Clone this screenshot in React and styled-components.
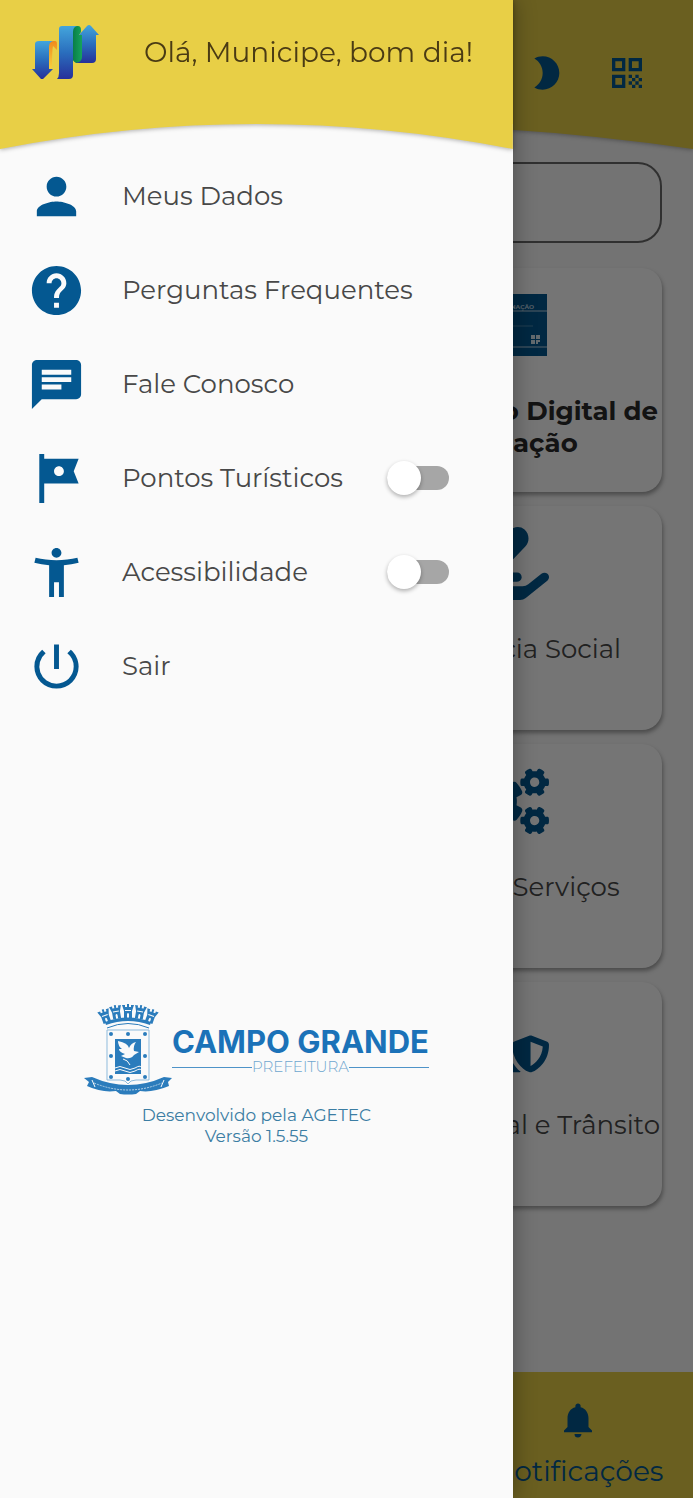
import React, { useState } from 'react';
import styled, { createGlobalStyle } from 'styled-components';
import {
  MdPerson,
  MdHelp,
  MdChat,
  MdTour,
  MdAccessibilityNew,
  MdPowerSettingsNew,
  MdBrightness2,
  MdQrCode,
  MdNotifications,
} from 'react-icons/md';
import { FaHandHoldingHeart, FaCogs, FaUserShield } from 'react-icons/fa';

const GlobalStyle = createGlobalStyle`
  * {
    box-sizing: border-box;
  }

  body {
    margin: 0;
    background: #fff;
    color: #484848;
    font-family: Montserrat, Inter, "Open Sans", sans-serif;
    font-weight: 400;
  }

  button, input {
    font: inherit;
    color: inherit;
  }
`;

const Screen = styled.div`
  position: relative;
  min-height: calc(100vh - 2px);
  overflow: hidden;
  display: flex;
  background: #fafafa;
`;

const Home = styled.div`
  flex: 1;
  display: flex;
  flex-direction: column;
`;

const Header = styled.header`
  filter: drop-shadow(0 1px 2px rgba(0, 0, 0, 0.3));

  .curve {
    display: block;
    width: 100%;
    height: 25px;
    fill: #e8cf46;
  }
`;

const HeaderBar = styled.div`
  display: flex;
  align-items: center;
  height: 124px;
  background: #e8cf46;
`;

const HomeBar = styled(HeaderBar)`
  justify-content: flex-end;
  gap: 41px;
  padding: 22px 46px 0 0;
`;

const DrawerBar = styled(HeaderBar)`
  gap: 44px;
  padding: 0 0 20px 32px;
`;

const IconButton = styled.button`
  display: flex;
  padding: 0;
  border: none;
  background: none;
  color: #045891;
  font-size: 40px;
`;

const Search = styled.input`
  height: 81px;
  margin: 13px 31px 25px;
  padding: 0 24px;
  border: 2px solid #6a6a6a;
  border-radius: 24px;
  background: transparent;
`;

const Cards = styled.div`
  display: grid;
  grid-template-columns: 1fr 1fr;
  gap: 14px;
  padding: 0 31px;
`;

const Card = styled.a`
  grid-column: 2;
  display: flex;
  flex-direction: column;
  align-items: center;
  height: 224px;
  border-radius: 20px;
  background: #fff;
  box-shadow: 1px 3px 4px rgba(0, 0, 0, 0.35);
  color: ${props => (props.$strong ? '#2a2a2a' : '#484848')};
  font-size: 26px;
  font-weight: ${props => (props.$strong ? 700 : 400)};
  line-height: 32px;
  text-align: center;
  text-decoration: none;
  white-space: nowrap;
`;

const CardIcon = styled.span`
  display: flex;
  align-items: center;
  height: 114px;
  margin-bottom: 13px;
  color: #045891;

  svg {
    width: 82px;
    height: 73px;
  }
`;

const BottomNav = styled.nav`
  display: grid;
  grid-template-columns: repeat(3, 1fr);
  height: 126px;
  margin-top: auto;
  background: #e8cf46;
`;

const NavItem = styled.a`
  grid-column: 3;
  display: flex;
  flex-direction: column;
  align-items: center;
  gap: 14px;
  padding-top: 27px;
  color: #045891;
  font-size: 28px;
  line-height: 32px;
  text-decoration: none;

  svg {
    width: 42px;
    height: 42px;
  }
`;

const Scrim = styled.div`
  position: absolute;
  inset: 0;
  background: rgba(0, 0, 0, 0.54);
`;

const Drawer = styled.aside`
  position: absolute;
  inset: 0 auto 0 0;
  width: 74%;
  background: #fafafa;
  box-shadow: 2px 0 20px rgba(0, 0, 0, 0.3);
`;

const Greeting = styled.h1`
  margin: 0;
  color: #4a3b14;
  font-size: 28px;
  font-weight: 400;
  white-space: nowrap;
`;

const Menu = styled.ul`
  margin: 0;
  padding: 0;
  list-style: none;
`;

const MenuRow = styled.li`
  display: flex;
  align-items: center;
  height: 94px;
  padding: 0 64px 0 27px;
  font-size: 26px;
  white-space: nowrap;

  a, label {
    display: flex;
    align-items: center;
    flex: 1;
    gap: 36px;
    color: inherit;
    text-decoration: none;
  }

  svg {
    width: 59px;
    height: 59px;
    color: #045891;
  }
`;

const Switch = styled.input`
  appearance: none;
  display: flex;
  align-items: center;
  flex: none;
  width: 62px;
  height: 24px;
  margin: 0;
  border-radius: 12px;
  background: ${props => (props.checked ? '#7fabc8' : '#a6a6a6')};

  &::before {
    content: '';
    width: 34px;
    height: 34px;
    margin-left: ${props => (props.checked ? '28px' : '0')};
    border-radius: 50%;
    background: ${props => (props.checked ? '#045891' : '#fff')};
    box-shadow: 0 2px 4px rgba(0, 0, 0, 0.3);
  }
`;

const Credits = styled.footer`
  margin-top: 291px;
  color: #3b7da3;
  font-size: 17px;
  line-height: 21px;
  text-align: center;

  p {
    margin: 0;
  }
`;

const Brand = styled.div`
  display: flex;
  justify-content: center;
  margin-bottom: 9px;
`;

const Wordmark = styled.div`
  padding-top: 22px;
  color: #1b72b8;
  font-family: Inter, sans-serif;
  font-size: 31px;
  font-weight: 700;
  line-height: 32px;
  white-space: nowrap;
`;

const Department = styled.div`
  display: flex;
  align-items: center;
  color: #6ea6cf;
  font-family: Montserrat, Inter, sans-serif;
  font-size: 15px;
  font-weight: 300;
  line-height: 18px;

  &::before, &::after {
    content: '';
    flex: 1;
    height: 1px;
    background: #4e93c8;
  }
`;

const Curve = () => (
  <svg className="curve" viewBox="0 0 100 25" preserveAspectRatio="none" aria-hidden="true">
    <path d="M0 -1H100V25Q50 -25 0 25Z" />
  </svg>
);

const Logo = () => (
  <svg width="68" height="56" viewBox="32 24 68 56" aria-hidden="true">
    <defs>
      <linearGradient id="blue" x1="0" y1="0" x2="0" y2="1">
        <stop offset="0" stopColor="#43a5dc" />
        <stop offset="0.5" stopColor="#2a6ebd" />
        <stop offset="1" stopColor="#26309a" />
      </linearGradient>
      <linearGradient id="orange" x1="0" y1="0" x2="0" y2="1">
        <stop offset="0" stopColor="#f08a1c" />
        <stop offset="1" stopColor="#f8cf3c" />
      </linearGradient>
      <linearGradient id="green" x1="0" y1="0" x2="1" y2="0">
        <stop offset="0" stopColor="#087a45" />
        <stop offset="1" stopColor="#16a45c" />
      </linearGradient>
    </defs>
    <path fill="url(#orange)" d="M48 41H55Q57 41 57 44V50L53 46Q52 50 52 68H48Z" />
    <path fill="url(#blue)" d="M35 44Q35 41 39 41H53Q49 42 49 47V69H53L43 79H41L32 69H35Z" />
    <path fill="url(#green)" d="M72 26H78Q81 26 81 30V32L79 35H82V63H76Q72 61 72 56Z" />
    <path fill="url(#blue)" d="M59 29Q59 26 62 26H77Q73 27 73 32V75Q73 79 69 79H57Q59 77 59 73Z" />
    <path fill="url(#blue)" d="M82 35H79L87 26Q89 24 91 26L99 35H96V59Q96 63 92 63H76Q82 62 82 57Z" />
  </svg>
);

const CertificateIcon = () => (
  <svg viewBox="-2 -5 82 73" aria-hidden="true">
    <path fill="#045891" d="M0 0H78V62H0Z" />
    <path stroke="#b9d2e2" d="M0 17H78M0 53H78" />
    <path stroke="#4787ad" d="M12 32H64" />
    <text x="65" y="15" textAnchor="end" fill="#b9d2e2" fontSize="6" fontWeight="700">VACINAÇÃO</text>
    <path fill="#d8e6ef" d="M62 41H66V45H62ZM67 41H71V45H67ZM62 46H66V50H62ZM67 46H71V48H69V50H67Z" />
  </svg>
);

const Tower = ({ x, y, angle }) => (
  <g transform={`translate(${x} ${y}) rotate(${angle})`}>
    <path d="M-6 -6H-3V-4H-1V-7H1V-4H3V-6H6L4 0V7H-4V0Z" />
    <path fill="#fafafa" d="M-1 7V3Q0 1 1 3V7ZM-3 -1H3V0H-3Z" />
  </g>
);

const Crest = () => (
  <svg width="88" height="92" viewBox="14 14 88 92" fill="#2b7cbc" aria-hidden="true">
    <Tower x={35} y={26} angle={-20} />
    <Tower x={46} y={22} angle={-10} />
    <Tower x={58} y={21} angle={0} />
    <Tower x={70} y={22} angle={10} />
    <Tower x={81} y={26} angle={20} />
    <path d="M35 32Q58 23 81 32L80 35Q58 27 36 35Z" />
    <path fill="none" stroke="#2b7cbc" d="M37 38Q58 29 79 38" />
    <path fill="none" stroke="#8fbbdc" d="M37 40H79V90H66Q60 90 58 94Q56 90 50 90H37Z" />
    {[[41, 44], [58, 44], [75, 44], [41, 66], [75, 66], [41, 87], [75, 87], [58, 89]].map(([cx, cy]) => (
      <circle key={`${cx}-${cy}`} cx={cx} cy={cy} r="2" />
    ))}
    <path d="M45 49H71V84H45Z" />
    <path fill="#fafafa" d="M48 51Q58 53 59 58Q61 53 66 52Q63 56 64 61L69 62L64 65Q61 69 56 68L51 66L55 64Q49 62 49 59L52 59Q48 56 48 51Z" />
    <path fill="none" stroke="#fafafa" d="M53 69Q58 70 60 75M45 78Q50 75 55 78T65 78T71 77M45 81Q50 78 55 81T65 81T71 80" />
    <path d="M14 88L22 87Q58 103 94 87L102 88L98 92L99 96Q82 103 70 101L66 104Q58 105 50 104L46 101Q32 103 17 96L19 92Z" />
    <path fill="none" stroke="#b5d2e8" strokeDasharray="2 1" d="M24 93Q58 107 92 93" />
    <path fill="none" stroke="#fafafa" d="M22 90L25 97M94 90L91 97" />
  </svg>
);

const cards = [
  { label: <>Documento Digital de<br />Vacinação</>, icon: <CertificateIcon />, strong: true },
  { label: 'Assistência Social', icon: <FaHandHoldingHeart /> },
  { label: 'Diversos Serviços', icon: <FaCogs /> },
  { label: 'Defesa Social e Trânsito', icon: <FaUserShield /> },
];

const menu = [
  { label: 'Meus Dados', Icon: MdPerson },
  { label: 'Perguntas Frequentes', Icon: MdHelp },
  { label: 'Fale Conosco', Icon: MdChat },
  { label: 'Pontos Turísticos', Icon: MdTour, toggle: 'tour' },
  { label: 'Acessibilidade', Icon: MdAccessibilityNew, toggle: 'accessibility' },
  { label: 'Sair', Icon: MdPowerSettingsNew },
];

const App = () => {
  const [enabled, setEnabled] = useState({ tour: false, accessibility: false });

  const flip = (name) => setEnabled({ ...enabled, [name]: !enabled[name] });

  return (
    <Screen>
      <GlobalStyle />
      <Home>
        <Header>
          <HomeBar>
            <IconButton aria-label="Modo escuro"><MdBrightness2 /></IconButton>
            <IconButton aria-label="QR code"><MdQrCode /></IconButton>
          </HomeBar>
          <Curve />
        </Header>
        <Search type="search" aria-label="Pesquisar" />
        <Cards>
          {cards.map(({ label, icon, strong }, i) => (
            <Card key={i} href="#" $strong={strong}>
              <CardIcon>{icon}</CardIcon>
              <span>{label}</span>
            </Card>
          ))}
        </Cards>
        <BottomNav>
          <NavItem href="#"><MdNotifications />Notificações</NavItem>
        </BottomNav>
      </Home>
      <Scrim />
      <Drawer>
        <Header>
          <DrawerBar>
            <Logo />
            <Greeting>Olá, Municipe, bom dia!</Greeting>
          </DrawerBar>
          <Curve />
        </Header>
        <Menu>
          {menu.map(({ label, Icon, toggle }) => (
            <MenuRow key={label}>
              {toggle
                ? <label htmlFor={toggle}><Icon />{label}</label>
                : <a href="#"><Icon />{label}</a>}
              {toggle && (
                <Switch id={toggle} type="checkbox" role="switch" checked={enabled[toggle]} onChange={() => flip(toggle)} />
              )}
            </MenuRow>
          ))}
        </Menu>
        <Credits>
          <Brand>
            <Crest />
            <Wordmark>
              CAMPO GRANDE
              <Department>PREFEITURA</Department>
            </Wordmark>
          </Brand>
          <p>Desenvolvido pela AGETEC</p>
          <p>Versão 1.5.55</p>
        </Credits>
      </Drawer>
    </Screen>
  );
};

export default App;
